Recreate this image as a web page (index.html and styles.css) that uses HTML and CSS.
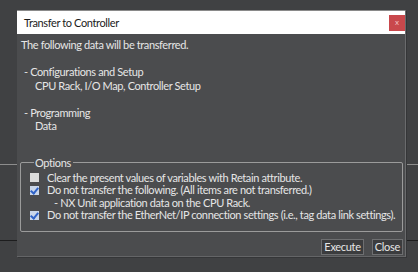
FILE: index.html
```html
<!DOCTYPE html>
<html lang="en">
<head>
    <meta charset="UTF-8">
    <title>Transfer to Controller</title>
    <link rel="stylesheet" href="styles.css">
</head>
<body>
    <div class="dialog">
        <div class="title-bar">
            <span class="title">Transfer to Controller</span>
            <span class="close-x">x</span>
        </div>

        <div class="content">
            <p class="line">The following data will be transferred.</p>
            <p class="line">&nbsp;</p>
            <p class="line item">- Configurations and Setup</p>
            <p class="line sub">CPU Rack, I/O Map, Controller Setup</p>
            <p class="line">&nbsp;</p>
            <p class="line item">- Programming</p>
            <p class="line sub">Data</p>

            <fieldset class="options">
                <legend>Options</legend>
                <div class="opt">
                    <span class="box"></span>
                    <span>Clear the present values of variables with Retain attribute.</span>
                </div>
                <div class="opt">
                    <span class="box checked"></span>
                    <span>Do not transfer the following. (All items are not transferred.)</span>
                </div>
                <div class="opt note">- NX Unit application data on the CPU Rack.</div>
                <div class="opt">
                    <span class="box checked"></span>
                    <span>Do not transfer the EtherNet/IP connection settings (i.e., tag data link settings).</span>
                </div>
            </fieldset>

            <div class="buttons">
                <button class="btn">Execute</button>
                <button class="btn">Close</button>
            </div>
        </div>
    </div>
</body>
</html>
```

FILE: styles.css
```css
:root {
    --bg-color: #404143;
    --dialog-bg: #4b4c4e;
    --text-color: #e6e6e6;
    --border-light: #9b9b9b;
    --check-blue: #2f63c8;
}

* {
    margin: 0;
    padding: 0;
    box-sizing: border-box;
}

body {
    width: 418px;
    height: 272px;
    overflow: hidden;
    font-family: Lato, 'Noto Sans', sans-serif;
    font-size: 11px;
    letter-spacing: -0.38px;
    color: var(--text-color);
    background-color: var(--bg-color);
    background-image:
        linear-gradient(to bottom, transparent 164px, #8d8d8d 164px, #8d8d8d 165px, transparent 165px),
        linear-gradient(to bottom, transparent 240px, #1d1d1e 240px, #1d1d1e 241px, transparent 241px);
    padding: 10px 0 0 17px;
}

.dialog {
    width: 389px;
    height: 247px;
    background-color: var(--dialog-bg);
    border-right: 1px solid #6a6b6d;
    border-bottom: 1px solid #646567;
    box-shadow: 1px 1px 0 #353638;
    display: flex;
    flex-direction: column;
}

.title-bar {
    height: 24px;
    flex-shrink: 0;
    background-color: #fff;
    border-top: 1px solid #8a8a8a;
    display: flex;
    align-items: center;
    justify-content: space-between;
    padding: 0 0 0 7px;
}

.title {
    color: #1b1b1b;
}

.close-x {
    width: 16px;
    height: 16px;
    background-color: #c9484c;
    color: #f2c0c0;
    font-size: 8px;
    letter-spacing: 0;
    line-height: 15px;
    text-align: center;
    margin-top: 1px;
}

.content {
    flex-grow: 1;
    padding: 4px 2px 0 4px;
    display: flex;
    flex-direction: column;
}

.line {
    line-height: 13.5px;
    white-space: nowrap;
}

.item {
    padding-left: 3px;
}

.sub {
    padding-left: 14px;
}

.options {
    margin: 23px 0 0 -1px;
    border: 1px solid var(--border-light);
    border-radius: 2px;
    padding: 3px 0 9px 9px;
}

.options legend {
    margin-left: 4px;
    padding: 0 2px 0 1px;
    line-height: 13px;
}

.opt {
    display: flex;
    align-items: center;
    gap: 8px;
    height: 12.5px;
    line-height: 12.5px;
    white-space: nowrap;
}

.note {
    padding-left: 24px;
}

.box {
    width: 9px;
    height: 9px;
    background-color: #dcdcdc;
    flex-shrink: 0;
    position: relative;
}

.box.checked {
    background-color: #c9d6ea;
}

.box.checked::after {
    content: '';
    position: absolute;
    left: 2px;
    top: 0;
    width: 3px;
    height: 6px;
    border-right: 2px solid var(--check-blue);
    border-bottom: 2px solid var(--check-blue);
    transform: rotate(40deg);
}

.buttons {
    display: flex;
    justify-content: flex-end;
    gap: 8px;
    margin-top: 7px;
}

.btn {
    font-family: Lato, 'Noto Sans', sans-serif;
    font-size: 11px;
    letter-spacing: -0.3px;
    color: var(--text-color);
    background-color: #3b3c3e;
    border: 1px solid #6e6f71;
    height: 16px;
    line-height: 13px;
    padding: 0 2px;
}
```
